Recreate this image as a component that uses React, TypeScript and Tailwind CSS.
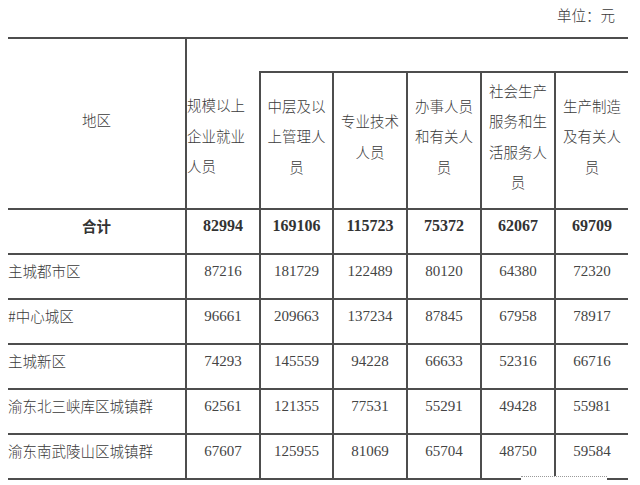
const line = "border-[#4d4d4d]";

const headers: { lines: string[]; left?: boolean }[] = [
  { lines: ["规模以上", "企业就业", "人员"], left: true },
  { lines: ["中层及以", "上管理人", "员"] },
  { lines: ["专业技术", "人员"] },
  { lines: ["办事人员", "和有关人", "员"] },
  { lines: ["社会生产", "服务和生", "活服务人", "员"] },
  { lines: ["生产制造", "及有关人", "员"] },
];

const rows: { name: string; values: string[]; total?: boolean }[] = [
  { name: "合计", values: ["82994", "169106", "115723", "75372", "62067", "69709"], total: true },
  { name: "主城都市区", values: ["87216", "181729", "122489", "80120", "64380", "72320"] },
  { name: "#中心城区", values: ["96661", "209663", "137234", "87845", "67958", "78917"] },
  { name: "主城新区", values: ["74293", "145559", "94228", "66633", "52316", "66716"] },
  { name: "渝东北三峡库区城镇群", values: ["62561", "121355", "77531", "55291", "49428", "55981"] },
  { name: "渝东南武陵山区城镇群", values: ["67607", "125955", "81069", "65704", "48750", "59584"] },
];

const cjk = "font-['Noto_Sans_CJK_SC',sans-serif] text-[14.5px]";
const num = "font-['Liberation_Serif',serif]";

export default function App() {
  return (
    <div className="relative h-[485px] w-[640px] overflow-hidden bg-white">
      <div className={`flex h-[37px] justify-end pr-[25px] pt-[5px] leading-5 font-light text-[#3a3a3a] ${cjk}`}>单位：元</div>

      <table className="ml-[8px] w-[620px] table-fixed border-collapse">
        <colgroup>
          <col className="w-[178px]" />
          <col className="w-[74px]" />
          <col className="w-[73px]" />
          <col className="w-[74px]" />
          <col className="w-[74px]" />
          <col className="w-[74px]" />
          <col className="w-[73px]" />
        </colgroup>
        <thead>
          <tr className="h-[34px]">
            <th rowSpan={2} className={`border-t-2 border-r-2 ${line} pb-[8px] text-center align-middle font-light text-[#3a3a3a] ${cjk}`}>
              地区
            </th>
            <th colSpan={6} className={`border-t-2 ${line}`} />
          </tr>
          <tr className="h-[137px]">
            {headers.map((h, i) => (
              <th
                key={i}
                className={`${i > 0 ? "border-t-2" : ""} ${i < headers.length - 1 ? "border-r-2" : ""} ${line} pb-2 align-middle font-light leading-[30.5px] text-[#3a3a3a] ${h.left ? "text-left" : "text-center"} ${cjk}`}
              >
                {h.lines.map((l, j) => (
                  <div key={j}>{l}</div>
                ))}
              </th>
            ))}
          </tr>
        </thead>
        <tbody>
          {rows.map((r, i) => (
            <tr key={r.name} className="h-[45px]">
              <td
                className={`border-t-2 border-r-2 ${i === rows.length - 1 ? "border-b-2" : ""} ${line} pb-3 align-middle leading-5 ${cjk} ${r.total ? "text-center font-bold text-[#333]" : "text-left font-light text-[#3a3a3a]"}`}
              >
                {r.name}
              </td>
              {r.values.map((v, j) => (
                <td
                  key={j}
                  className={`border-t-2 ${j < r.values.length - 1 ? "border-r-2" : ""} ${i === rows.length - 1 ? "border-b-2" : ""} ${line} pb-3 text-center align-middle leading-5 ${num} ${r.total ? "text-[16px] font-bold text-[#333]" : "text-[15px] text-[#444]"}`}
                >
                  {v}
                </td>
              ))}
            </tr>
          ))}
        </tbody>
      </table>

      {/* faint watermark over the bottom-right corner */}
      <div className="absolute left-[521px] top-[476px] h-[4px] w-[86px] border-t border-dotted border-[#9a9a9a] bg-white" />
    </div>
  );
}
